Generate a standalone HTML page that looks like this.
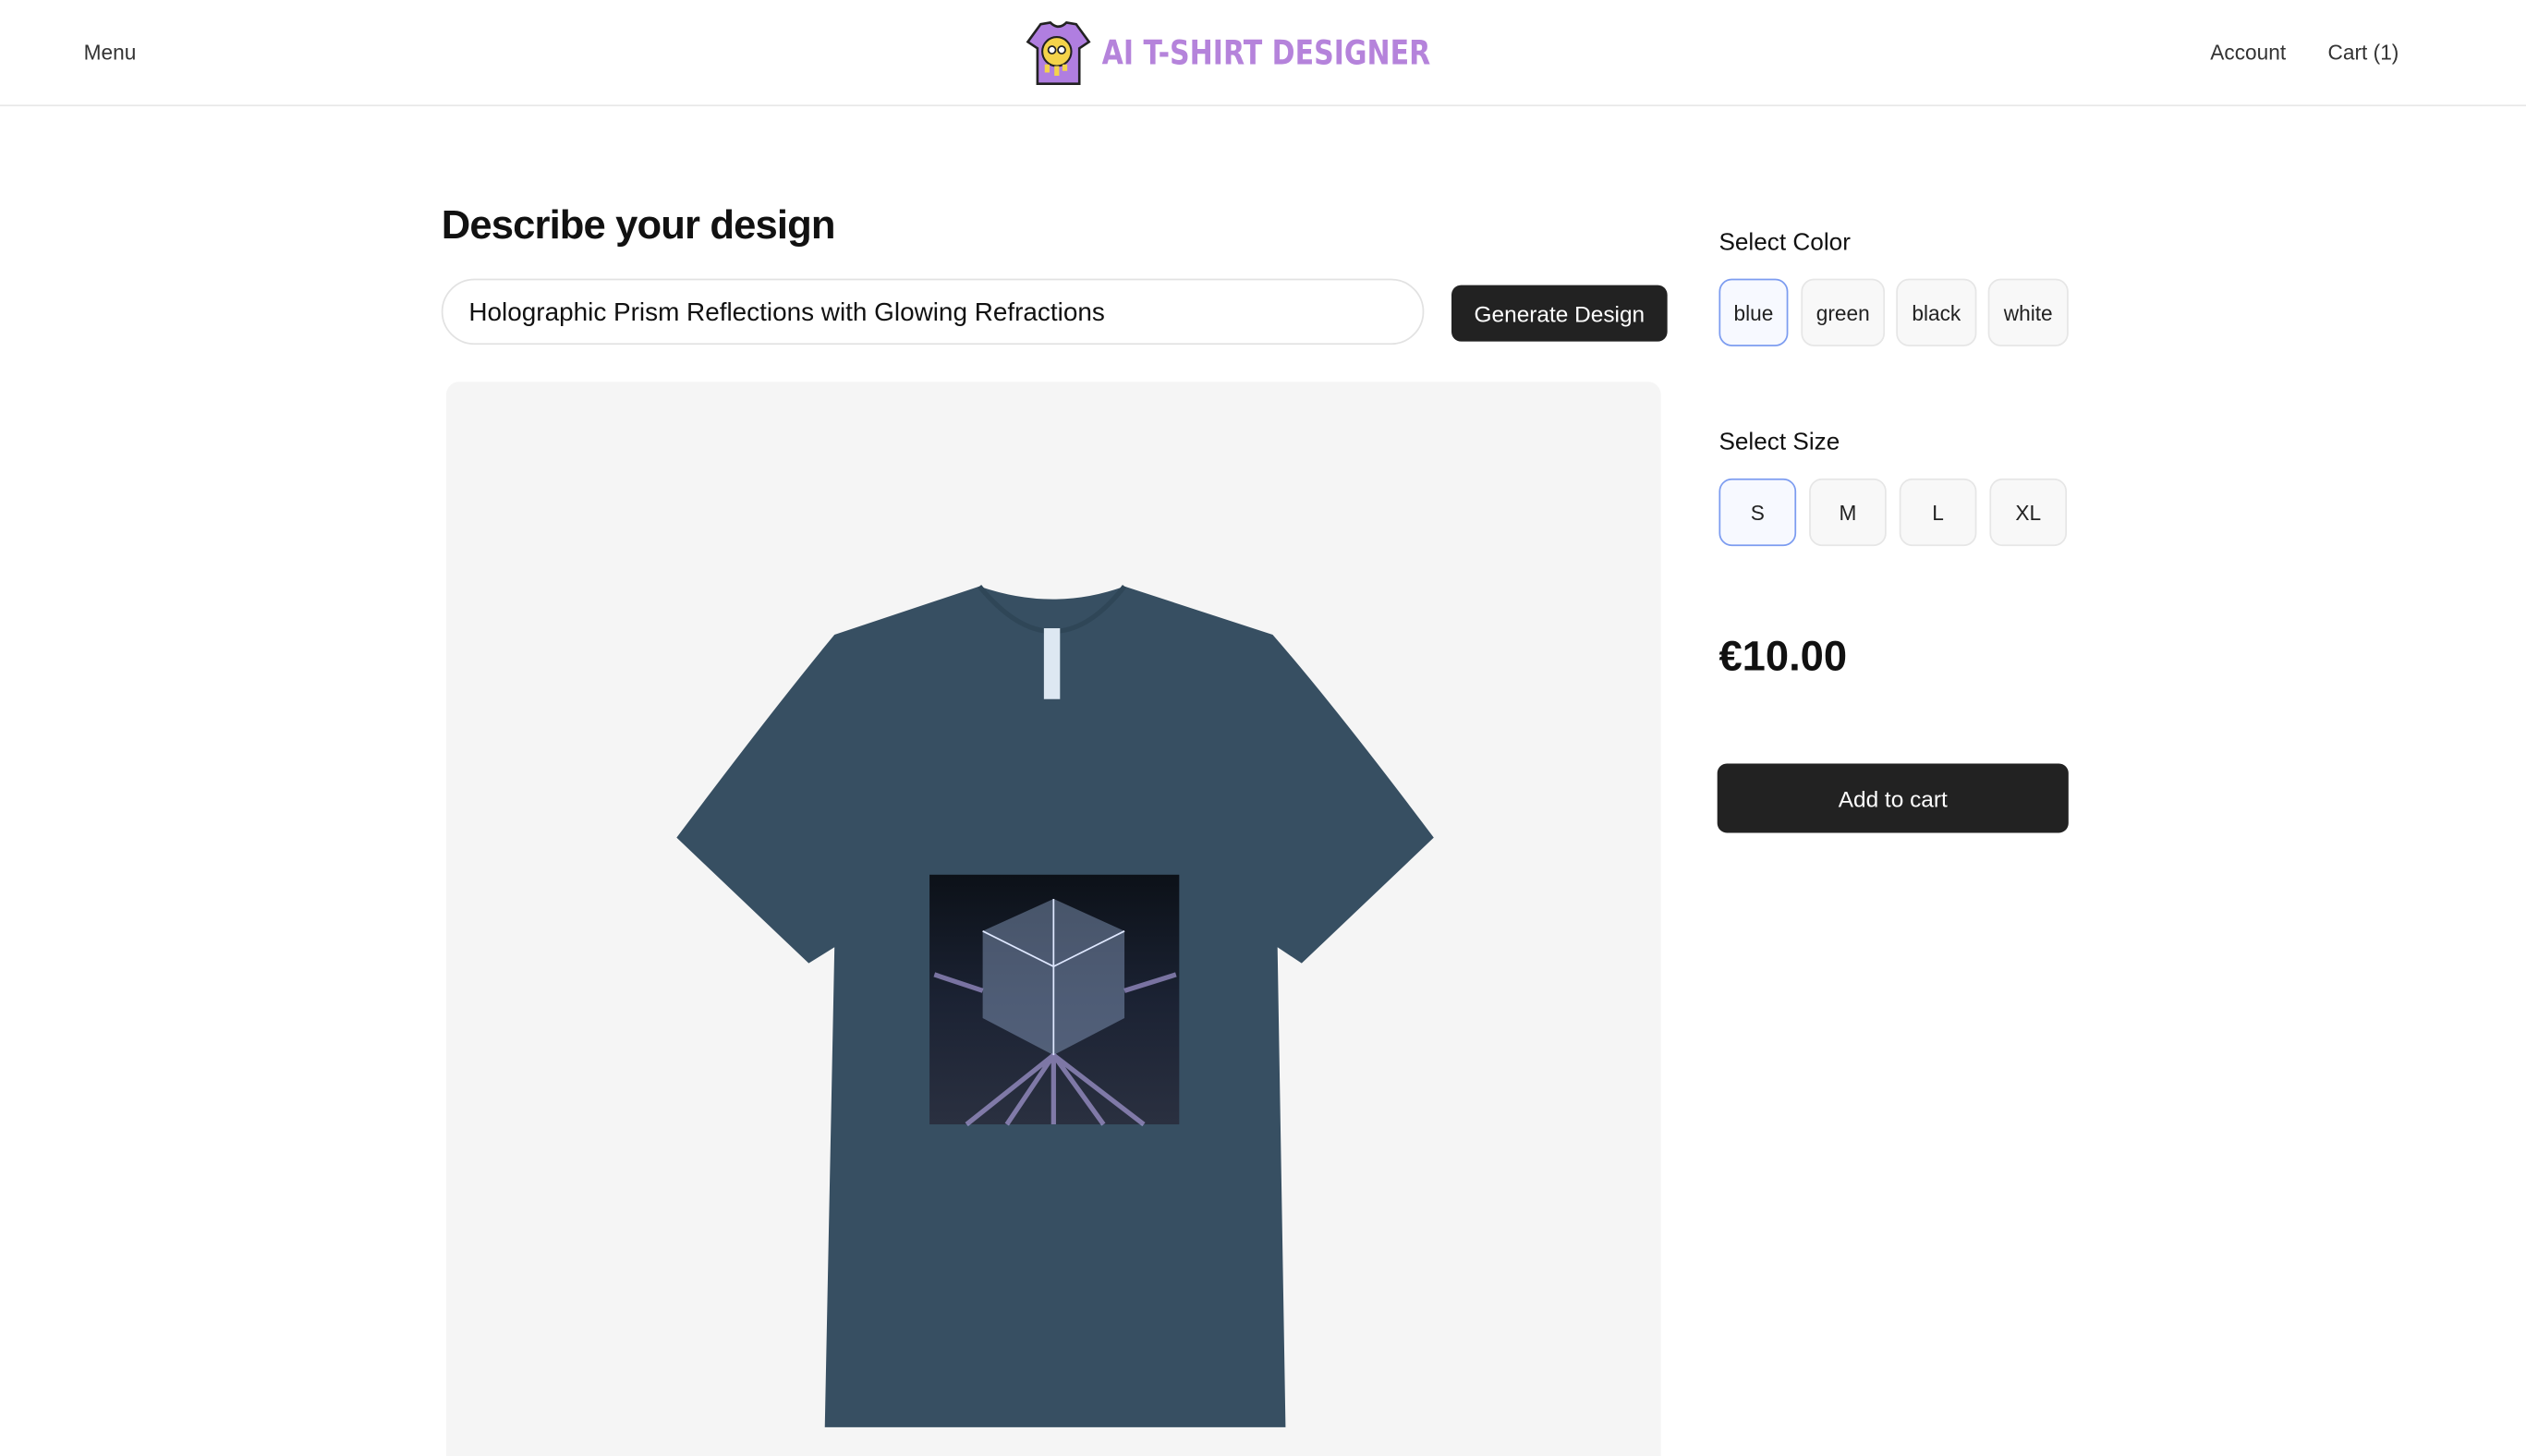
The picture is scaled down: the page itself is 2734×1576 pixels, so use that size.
<!DOCTYPE html>
<html><head><meta charset="utf-8"><style>
html,body{margin:0;padding:0;background:#fff;overflow:hidden}
body{width:2734px;height:1576px}
#w{width:1568px;height:904px;transform:scale(1.74362);transform-origin:0 0;position:relative;font-family:"Liberation Sans",sans-serif;color:#111}
.a{position:absolute}
.btn{position:absolute;border:1px solid #e6e6e6;border-radius:8px;background:#f8f8f8;font-size:13px;display:flex;align-items:center;justify-content:center;color:#222}
.sel{border-color:#7c9cf0;background:#f7f9ff}
</style></head><body><div id="w">
<div class="a" style="left:52px;top:25px;font-size:13px;color:#333">Menu</div>
<div class="a" style="left:1372px;top:25px;font-size:13px;color:#333">Account</div>
<div class="a" style="left:1445px;top:25px;font-size:13px;color:#333">Cart (1)</div>
<div class="a" style="left:0;top:65px;width:1568px;height:1px;background:#e8e8e8"></div>
<svg class="a" style="left:636px;top:12px" width="42" height="42" viewBox="0 0 42 42">
<path d="M10 3 L16 2 Q21 7 26 2 L32 3 L40 14 L34 18 L34 40 L8 40 L8 18 L2 14 Z" fill="#b07ee0" stroke="#222" stroke-width="1.5"/>
<circle cx="20" cy="20" r="9" fill="#f4d34a" stroke="#222" stroke-width="1.2"/>
<circle cx="17" cy="19" r="2.3" fill="#fff" stroke="#222"/><circle cx="23" cy="19" r="2.3" fill="#fff" stroke="#222"/>
<path d="M14 28 L14 33 M20 29 L20 35 M25 28 L25 32" stroke="#f4d34a" stroke-width="3"/>
</svg>
<div class="a" style="left:684px;top:21px;font-size:21px;font-weight:bold;color:#b583db;font-family:'DejaVu Sans',sans-serif;white-space:nowrap;transform:scaleX(0.82);transform-origin:0 0">AI T-SHIRT DESIGNER</div>

<div class="a" style="left:274px;top:126px;font-size:25px;font-weight:bold;letter-spacing:-0.5px">Describe your design</div>
<div class="a" style="left:274px;top:173px;width:610px;height:41px;border:1px solid #e2e2e2;border-radius:21px;box-sizing:border-box"></div>
<div class="a" style="left:291px;top:186px;font-size:16px;color:#111">Holographic Prism Reflections with Glowing Refractions</div>
<div class="a" style="left:901px;top:177px;width:134px;height:35px;background:#222;border-radius:6px;color:#fff;font-size:14px;display:flex;align-items:center;justify-content:center">Generate Design</div>

<div class="a" style="left:277px;top:237px;width:754px;height:680px;background:#f5f5f5;border-radius:8px"></div>
<svg class="a" style="left:0;top:0" width="1568" height="904">
<defs><linearGradient id="g" x1="0" y1="0" x2="0" y2="1"><stop offset="0" stop-color="#0c1118"/><stop offset="0.5" stop-color="#1b2233"/><stop offset="1" stop-color="#2a3040"/></linearGradient></defs>
<path d="M608 364 Q654 380 698 364 L790 394 Q830 440 890 520 L808 598 L793 588 L798 886 L512 886 L518 588 L502 598 L420 520 Q480 440 518 394 Z" fill="#374f62"/>
<path d="M608 364 Q654 420 698 364" fill="none" stroke="#2f4657" stroke-width="3"/>
<rect x="648" y="390" width="10" height="44" fill="#dde8f2"/>
<rect x="577" y="543" width="155" height="155" fill="url(#g)"/>
<path d="M654 558 L698 578 L698 632 L654 655 L610 632 L610 578 Z" fill="#8fa3c8" opacity="0.45"/>
<path d="M610 578 L654 600 L698 578 M654 600 L654 655 M654 558 L654 600" stroke="#dfe8ff" stroke-width="1" fill="none"/>
<path d="M654 655 L600 698 M654 655 L625 698 M654 655 L654 698 M654 655 L685 698 M654 655 L710 698 M610 615 L580 605 M698 615 L730 605" stroke="#c9b8ff" stroke-width="3" opacity="0.55"/>
</svg>

<div class="a" style="left:1067px;top:142px;font-size:15px">Select Color</div>
<div class="btn sel" style="left:1067px;top:173px;width:41px;height:40px">blue</div>
<div class="btn" style="left:1118px;top:173px;width:50px;height:40px">green</div>
<div class="btn" style="left:1177px;top:173px;width:48px;height:40px">black</div>
<div class="btn" style="left:1234px;top:173px;width:48px;height:40px">white</div>
<div class="a" style="left:1067px;top:266px;font-size:15px">Select Size</div>
<div class="btn sel" style="left:1067px;top:297px;width:46px;height:40px">S</div>
<div class="btn" style="left:1123px;top:297px;width:46px;height:40px">M</div>
<div class="btn" style="left:1179px;top:297px;width:46px;height:40px">L</div>
<div class="btn" style="left:1235px;top:297px;width:46px;height:40px">XL</div>
<div class="a" style="left:1067px;top:392px;font-size:26px;font-weight:bold">€10.00</div>
<div class="a" style="left:1066px;top:474px;width:218px;height:43px;background:#222;border-radius:6px;color:#fff;font-size:14px;display:flex;align-items:center;justify-content:center">Add to cart</div>
</div></body></html>
